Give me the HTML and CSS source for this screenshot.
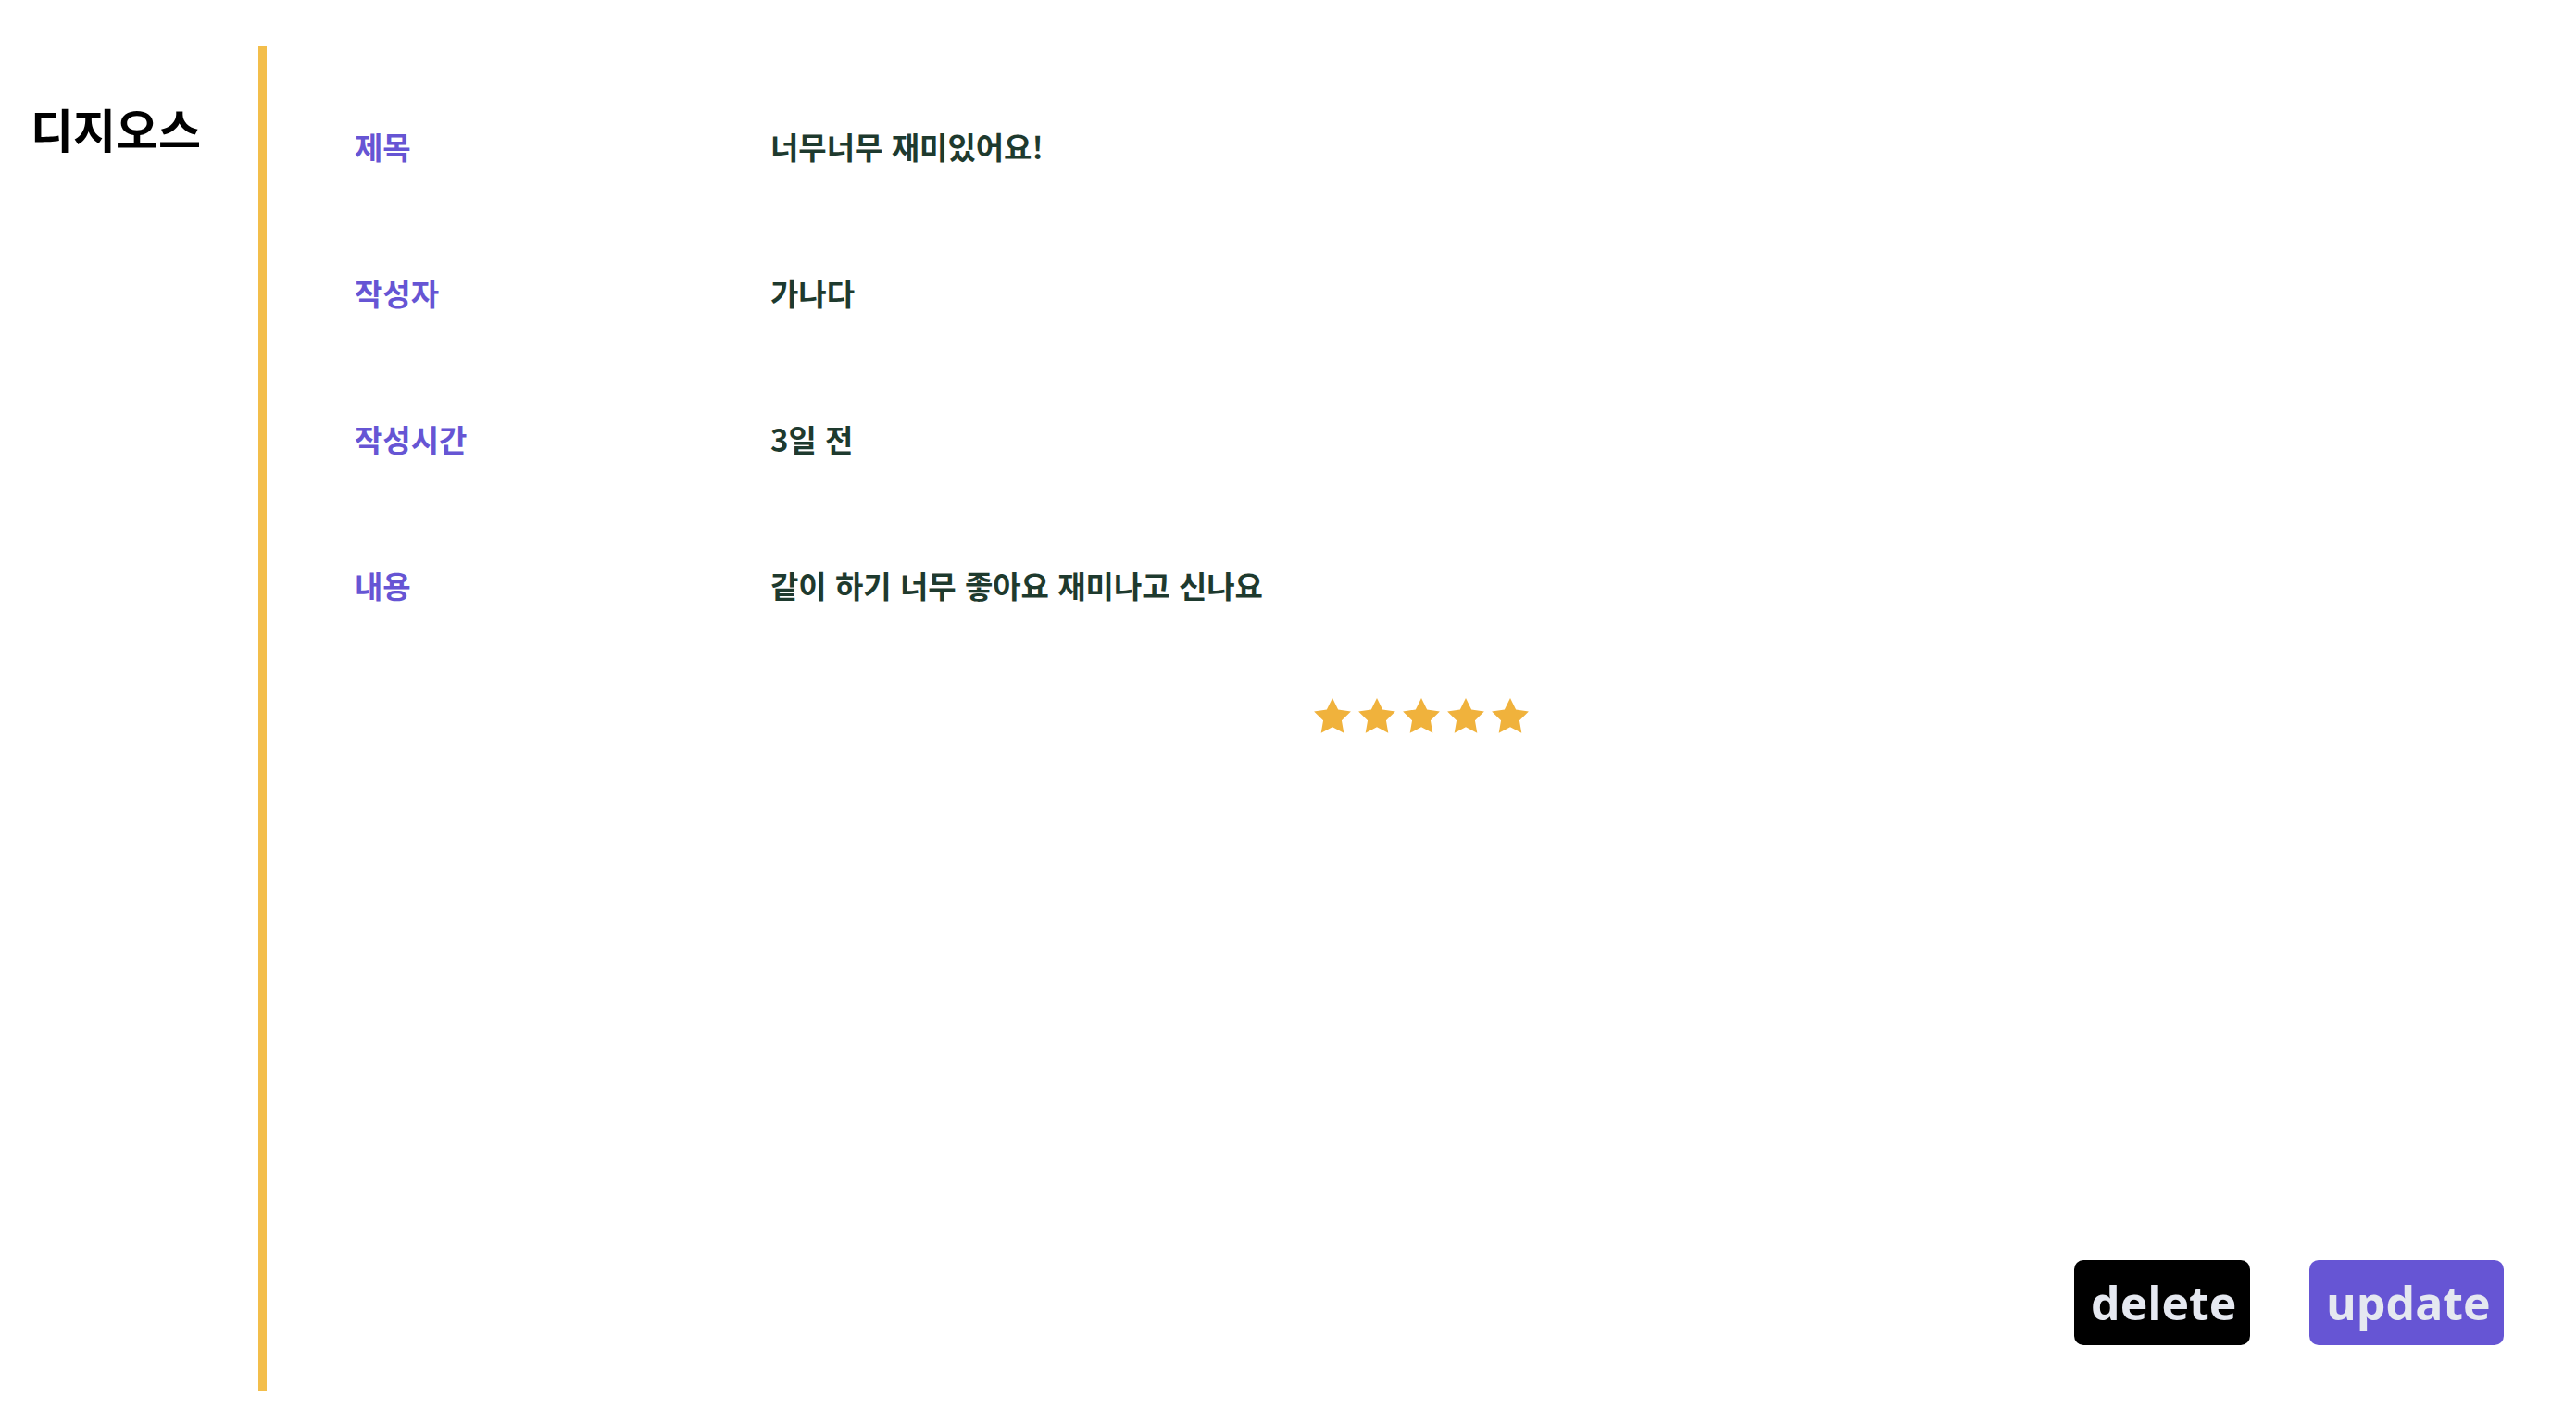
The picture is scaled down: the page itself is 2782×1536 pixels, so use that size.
FILE: index.html
```html
<!DOCTYPE html>
<html lang="ko">
<head>
<meta charset="utf-8">
<title>디지오스</title>
<link rel="stylesheet" href="styles.css">
</head>
<body>
<div class="page">
  <aside class="sidebar">
    <h1 class="logo">디지오스</h1>
  </aside>
  <main class="main">
    <section class="rows">
      <div class="row"><span class="label">제목</span><span class="value">너무너무 재미있어요!</span></div>
      <div class="row"><span class="label">작성자</span><span class="value">가나다</span></div>
      <div class="row"><span class="label">작성시간</span><span class="value">3일 전</span></div>
      <div class="row"><span class="label">내용</span><span class="value">같이 하기 너무 좋아요 재미나고 신나요</span></div>
    </section>
    <div class="stars">
      <svg class="star" viewBox="2 2 20 19.1"><polygon points="12,2 15.09,8.26 22,9.27 17,14.14 18.18,21.02 12,17.77 5.82,21.02 7,14.14 2,9.27 8.91,8.26"/></svg>
      <svg class="star" viewBox="2 2 20 19.1"><polygon points="12,2 15.09,8.26 22,9.27 17,14.14 18.18,21.02 12,17.77 5.82,21.02 7,14.14 2,9.27 8.91,8.26"/></svg>
      <svg class="star" viewBox="2 2 20 19.1"><polygon points="12,2 15.09,8.26 22,9.27 17,14.14 18.18,21.02 12,17.77 5.82,21.02 7,14.14 2,9.27 8.91,8.26"/></svg>
      <svg class="star" viewBox="2 2 20 19.1"><polygon points="12,2 15.09,8.26 22,9.27 17,14.14 18.18,21.02 12,17.77 5.82,21.02 7,14.14 2,9.27 8.91,8.26"/></svg>
      <svg class="star" viewBox="2 2 20 19.1"><polygon points="12,2 15.09,8.26 22,9.27 17,14.14 18.18,21.02 12,17.77 5.82,21.02 7,14.14 2,9.27 8.91,8.26"/></svg>
    </div>
    <div class="actions">
      <button class="btn btn-delete">delete</button>
      <button class="btn btn-update">update</button>
    </div>
  </main>
</div>
</body>
</html>
```
FILE: styles.css
```css
html, body {
  margin: 0;
  padding: 0;
  background: #ffffff;
}

body {
  font-family: "Noto Sans CJK KR", "Noto Sans", sans-serif;
}

.page {
  display: flex;
  height: 1536px;
  box-sizing: border-box;
}

.sidebar {
  width: 279px;
  flex: none;
  padding-left: 33px;
  padding-top: 112px;
  box-sizing: border-box;
}

.logo {
  margin: 0;
  font-family: "Noto Sans CJK KR", sans-serif;
  font-weight: 700;
  font-size: 50px;
  line-height: 52px;
  color: #000000;
  letter-spacing: 0;
}

.main {
  flex: 1;
  margin-top: 50px;
  height: 1452px;
  border-left: 9px solid #F3BE4B;
  display: flex;
  flex-direction: column;
  box-sizing: border-box;
}

.rows {
  padding-top: 29px;
  padding-left: 95px;
  display: flex;
  flex-direction: column;
}

.row {
  height: 158px;
  display: flex;
  align-items: center;
  font-family: "Noto Sans CJK KR", sans-serif;
  font-weight: 700;
  font-size: 33px;
  line-height: 38px;
}

.label {
  width: 449px;
  flex: none;
  color: #6655D4;
}

.value {
  color: #1E3A2E;
}

.stars {
  margin-top: 43px;
  display: flex;
  justify-content: center;
  gap: 8px;
}

.star {
  width: 40px;
  height: 38px;
  fill: #F0B23C;
  display: block;
}

.actions {
  margin-top: auto;
  padding-right: 78px;
  padding-bottom: 49px;
  display: flex;
  justify-content: flex-end;
  gap: 64px;
}

.btn {
  border: none;
  border-radius: 10px;
  height: 92px;
  padding: 0 18px;
  font-family: "Open Sans", "Lato", sans-serif;
  font-weight: 700;
  font-size: 50px;
  line-height: 1;
  color: #E5E8F0;
  cursor: pointer;
}

.btn-delete {
  background: #000000;
  width: 190px;
}

.btn-update {
  background: #6655D4;
  width: 210px;
}
```
